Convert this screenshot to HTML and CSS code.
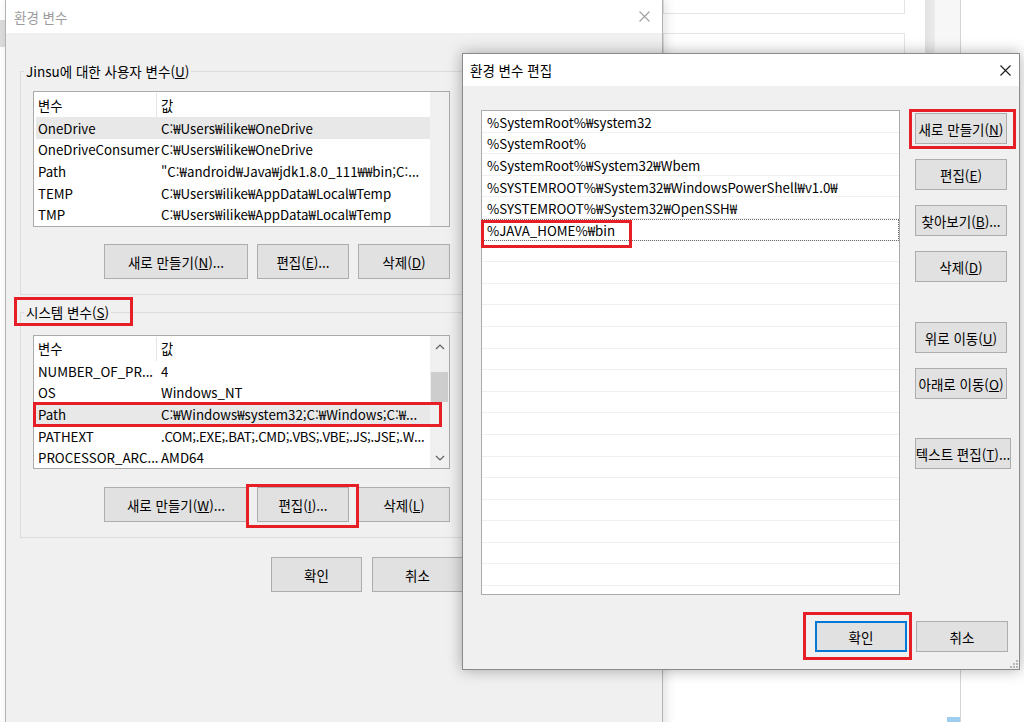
FILE: index.html
```html
<!DOCTYPE html>
<html lang="ko">
<head>
<meta charset="utf-8">
<title>환경 변수 편집</title>
<link rel="stylesheet" href="styles.css">
</head>
<body>
<div class="desktop">
  <div class="bg-edge"></div>
  <div class="bg-card bg-card1"></div>
  <div class="bg-card bg-card2"></div>
  <div class="bg-bar"></div>
  <div class="bg-bar2"></div>
  <div class="bg-line"></div>
  <div class="bg-blue"></div>

  <section class="dialog env">
    <header class="titlebar">
      <span class="title">환경 변수</span>
      <svg class="close" width="11" height="11" viewBox="0 0 11 11"><path d="M0.5 0.5 L10.5 10.5 M10.5 0.5 L0.5 10.5" stroke="#a0a0a0" stroke-width="1.1" fill="none"/></svg>
    </header>
    <div class="env-body">
      <fieldset class="group group-user">
        <legend>Jinsu에 대한 사용자 변수(<u>U</u>)</legend>
        <div class="list list-user">
          <div class="list-main">
            <div class="lhead"><span class="cname chead">변수</span><span class="cval">값</span></div>
            <div class="lrow sel"><span class="cname">OneDrive</span><span class="cval">C:₩Users₩ilike₩OneDrive</span></div>
            <div class="lrow"><span class="cname">OneDriveConsumer</span><span class="cval">C:₩Users₩ilike₩OneDrive</span></div>
            <div class="lrow"><span class="cname">Path</span><span class="cval">"C:₩android₩Java₩jdk1.8.0_111₩₩bin;C:...</span></div>
            <div class="lrow"><span class="cname">TEMP</span><span class="cval">C:₩Users₩ilike₩AppData₩Local₩Temp</span></div>
            <div class="lrow"><span class="cname">TMP</span><span class="cval">C:₩Users₩ilike₩AppData₩Local₩Temp</span></div>
          </div>
          <div class="scroll"></div>
        </div>
        <div class="btnrow btnrow-user">
          <button class="btn btn-wide">새로 만들기(<u>N</u>)...</button>
          <button class="btn">편집(<u>E</u>)...</button>
          <button class="btn">삭제(<u>D</u>)</button>
        </div>
      </fieldset>

      <fieldset class="group group-sys">
        <legend>시스템 변수(<u>S</u>)</legend>
        <div class="list list-sys">
          <div class="list-main">
            <div class="lhead"><span class="cname chead">변수</span><span class="cval">값</span></div>
            <div class="lrow"><span class="cname">NUMBER_OF_PR...</span><span class="cval">4</span></div>
            <div class="lrow"><span class="cname">OS</span><span class="cval">Windows_NT</span></div>
            <div class="lrow sel"><span class="cname">Path</span><span class="cval">C:₩Windows₩system32;C:₩Windows;C:₩...</span></div>
            <div class="lrow"><span class="cname">PATHEXT</span><span class="cval cval-tight">.COM;.EXE;.BAT;.CMD;.VBS;.VBE;.JS;.JSE;.W...</span></div>
            <div class="lrow"><span class="cname">PROCESSOR_ARC...</span><span class="cval">AMD64</span></div>
          </div>
          <div class="scroll scroll-active">
            <div class="sarrow"><svg width="10" height="6" viewBox="0 0 10 6"><path d="M1 5 L5 1 L9 5" stroke="#606060" stroke-width="1.2" fill="none"/></svg></div>
            <div class="strack"><div class="sthumb"></div></div>
            <div class="sarrow"><svg width="10" height="6" viewBox="0 0 10 6"><path d="M1 1 L5 5 L9 1" stroke="#606060" stroke-width="1.2" fill="none"/></svg></div>
          </div>
        </div>
        <div class="btnrow btnrow-sys">
          <button class="btn btn-wide">새로 만들기(<u>W</u>)...</button>
          <button class="btn">편집(<u>I</u>)...</button>
          <button class="btn">삭제(<u>L</u>)</button>
        </div>
      </fieldset>

      <div class="okrow">
        <button class="btn btn-ok">확인</button>
        <button class="btn btn-ok">취소</button>
      </div>
    </div>
  </section>

  <section class="dialog edit">
    <header class="titlebar">
      <span class="title">환경 변수 편집</span>
      <svg class="close" width="11" height="11" viewBox="0 0 11 11"><path d="M0.5 0.5 L10.5 10.5 M10.5 0.5 L0.5 10.5" stroke="#1a1a1a" stroke-width="1.1" fill="none"/></svg>
    </header>
    <div class="edit-body">
      <div class="edit-top">
        <div class="plist">
          <div class="prow">%SystemRoot%₩system32</div>
          <div class="prow">%SystemRoot%</div>
          <div class="prow">%SystemRoot%₩System32₩Wbem</div>
          <div class="prow">%SYSTEMROOT%₩System32₩WindowsPowerShell₩v1.0₩</div>
          <div class="prow">%SYSTEMROOT%₩System32₩OpenSSH₩</div>
          <div class="prow focus">%JAVA_HOME%₩bin</div>
          <div class="prow"></div>
          <div class="prow"></div>
          <div class="prow"></div>
          <div class="prow"></div>
          <div class="prow"></div>
          <div class="prow"></div>
          <div class="prow"></div>
          <div class="prow"></div>
          <div class="prow"></div>
          <div class="prow"></div>
          <div class="prow"></div>
          <div class="prow"></div>
          <div class="prow"></div>
          <div class="prow"></div>
          <div class="prow"></div>
          <div class="prow"></div>
          <div class="prow"></div>
        </div>
        <div class="side">
          <button class="btn sbtn">새로 만들기(<u>N</u>)</button>
          <button class="btn sbtn">편집(<u>E</u>)</button>
          <button class="btn sbtn">찾아보기(<u>B</u>)...</button>
          <button class="btn sbtn">삭제(<u>D</u>)</button>
          <button class="btn sbtn sbtn-gap">위로 이동(<u>U</u>)</button>
          <button class="btn sbtn">아래로 이동(<u>O</u>)</button>
          <button class="btn sbtn sbtn-gap2 sbtn-wide">텍스트 편집(<u>T</u>)...</button>
        </div>
      </div>
      <div class="edit-bottom">
        <button class="btn ebtn default">확인</button>
        <button class="btn ebtn">취소</button>
      </div>
    </div>
    <svg class="grip" width="10" height="10" viewBox="0 0 10 10">
      <rect x="8" y="2" width="2" height="2" fill="#b8b8b8"/>
      <rect x="5" y="5" width="2" height="2" fill="#b8b8b8"/>
      <rect x="8" y="5" width="2" height="2" fill="#b8b8b8"/>
      <rect x="2" y="8" width="2" height="2" fill="#b8b8b8"/>
      <rect x="5" y="8" width="2" height="2" fill="#b8b8b8"/>
      <rect x="8" y="8" width="2" height="2" fill="#b8b8b8"/>
    </svg>
  </section>

  <div class="mark mark-syslabel"></div>
  <div class="mark mark-syspath"></div>
  <div class="mark mark-sysedit"></div>
  <div class="mark mark-java"></div>
  <div class="mark mark-new"></div>
  <div class="mark mark-ok"></div>
</div>
</body>
</html>
```

FILE: styles.css
```css
* { box-sizing: border-box; }
html, body { margin: 0; padding: 0; }
body {
  width: 1024px;
  height: 722px;
  overflow: hidden;
  background: #ffffff;
  font-family: "Noto Sans CJK KR", "Noto Sans", sans-serif;
  font-size: 13.3px;
  color: #000;
}
u { text-decoration: underline; text-underline-offset: 1px; }
.desktop { position: relative; width: 1024px; height: 722px; overflow: hidden; }

/* background desktop pieces */
.bg-edge { position: absolute; left: 0; top: 20px; width: 5px; height: 27px; background: #dcdcdc; }
.bg-card { position: absolute; left: 663px; width: 242px; border: 1px solid #e4e4e4; background: #fff; }
.bg-card1 { top: -2px; height: 16px; }
.bg-card2 { top: 33px; height: 40px; }
.bg-bar { position: absolute; left: 925px; top: 0; width: 10px; height: 53px; background: linear-gradient(to right, #e2e2e2, #ececec); }
.bg-bar2 { position: absolute; left: 935px; top: 0; width: 25px; height: 53px; background: #f7f7f7; }
.bg-line { position: absolute; left: 960px; top: 0; width: 1px; height: 722px; background: #d4d4d4; }
.bg-blue { position: absolute; left: 947px; top: 717px; width: 13px; height: 5px; background: #9fcdf0; }

/* dialogs */
.dialog { position: absolute; background: #f0f0f0; display: flex; flex-direction: column; }
.titlebar { flex: none; background: #fff; display: flex; align-items: center; justify-content: space-between; }
.title { line-height: 16px; font-size: 13.5px; }
.close { display: block; }

.env {
  left: 5px; top: 0; width: 658px; height: 740px;
  border-left: 1px solid #b3b3b3; border-right: 1px solid #b3b3b3;
  box-shadow: 3px 0 10px rgba(0,0,0,0.12);
}
.env .titlebar { height: 33px; padding: 0 12px 0 8px; color: #9c9c9c; }
.env-body { padding: 30px 0 0 14px; }

.group { margin: 0; padding: 12px 12px 15px; border: 1px solid #dcdcdc; width: 443px; min-width: 0; }
.group legend { padding: 0 2px; margin-left: -9px; line-height: 16px; height: 16px; font-size: 13.5px; }
.group-sys { margin-top: 9px; padding-top: 15px; }

.list { display: flex; background: #fff; border: 1px solid #ababab; }
.list-user { height: 136px; }
.list-sys { height: 134px; }
.list-main { flex: 1; padding-left: 2px; overflow: hidden; }
.lhead { display: flex; align-items: center; height: 25px; padding-top: 1px; }
.list-sys .lhead { height: 24px; }
.lrow { display: flex; align-items: center; height: 21.6px; padding-top: 1px; white-space: nowrap; }
.lrow.sel { background: #e8e8e8; }
.cname { width: 121px; flex: none; padding-left: 2px; overflow: visible; }
.chead { border-right: 1px solid #e5e5e5; height: 24px; display: flex; align-items: center; }
.cval { padding-left: 4px; overflow: hidden; }
.cval-tight { letter-spacing: -0.3px; }
.scroll { width: 19px; flex: none; background: #f0f0f0; }
.scroll-active { display: flex; flex-direction: column; }
.sarrow { height: 22px; display: flex; align-items: center; justify-content: center; flex: none; }
.sarrow:last-child { height: 21px; }
.strack { flex: 1; padding: 14px 1px 0; }
.sthumb { height: 30px; background: #cdcdcd; }

.btn {
  font-family: inherit; font-size: 13.5px; color: #000;
  background: #e1e1e1; border: 1px solid #adadad; border-radius: 0;
  padding: 0; margin: 0;
  display: flex; align-items: center; justify-content: center;
  white-space: nowrap;
}
.btnrow { display: flex; justify-content: flex-end; gap: 9px; }
.btnrow .btn { height: 35px; width: 92px; }
.btnrow .btn-wide { width: 144px; }
.btnrow-user { margin-top: 17px; }
.btnrow-sys { margin-top: 18px; }
.okrow { display: flex; justify-content: flex-end; gap: 10px; width: 443px; margin-top: 19px; }
.btn-ok { width: 91px; height: 35px; }

.edit {
  left: 462px; top: 53px; width: 558px; height: 617px;
  border: 1px solid #8a8a8a;
  box-shadow: 0 0 14px rgba(0,0,0,0.32);
}
.edit .titlebar { height: 32px; padding: 0 8px 0 7px; }
.edit-body { flex: 1; display: flex; flex-direction: column; padding: 24px 8px 17px 18px; }
.edit-top { display: flex; height: 485px; flex: none; }
.plist { width: 419px; height: 485px; flex: none; background: #fff; border: 1px solid #ababab; overflow: hidden; }
.prow { height: 21.6px; border-bottom: 1px solid #f0f0f0; padding: 2px 0 0 5px; display: flex; align-items: center; white-space: nowrap; }
.prow.focus { outline: 1px dotted #6a6a6a; outline-offset: -1px; }
.side { width: 96px; margin-left: 15px; display: flex; flex-direction: column; align-items: flex-start; gap: 15px; padding-top: 3px; }
.sbtn { width: 92px; height: 31px; }
.sbtn-wide { width: 96px; }
.sbtn-gap { margin-top: 25px; }
.sbtn-gap2 { margin-top: 24px; }
.edit-bottom { display: flex; justify-content: flex-end; gap: 9px; margin-top: 26px; margin-right: 3px; }
.ebtn { width: 92px; height: 31px; }
.ebtn.default { border: 2px solid #0078d7; }
.grip { position: absolute; right: 1px; bottom: 1px; }

/* red annotation boxes */
.mark { position: absolute; border: 3px solid #e61e25; }
.mark-syslabel { left: 14px; top: 297px; width: 119px; height: 29px; }
.mark-syspath { left: 33px; top: 402px; width: 409px; height: 25px; }
.mark-sysedit { left: 246px; top: 484px; width: 113px; height: 44px; }
.mark-java { left: 481px; top: 220px; width: 151px; height: 28px; }
.mark-new { left: 909px; top: 109px; width: 107px; height: 40px; }
.mark-ok { left: 803px; top: 612px; width: 109px; height: 48px; }
```
